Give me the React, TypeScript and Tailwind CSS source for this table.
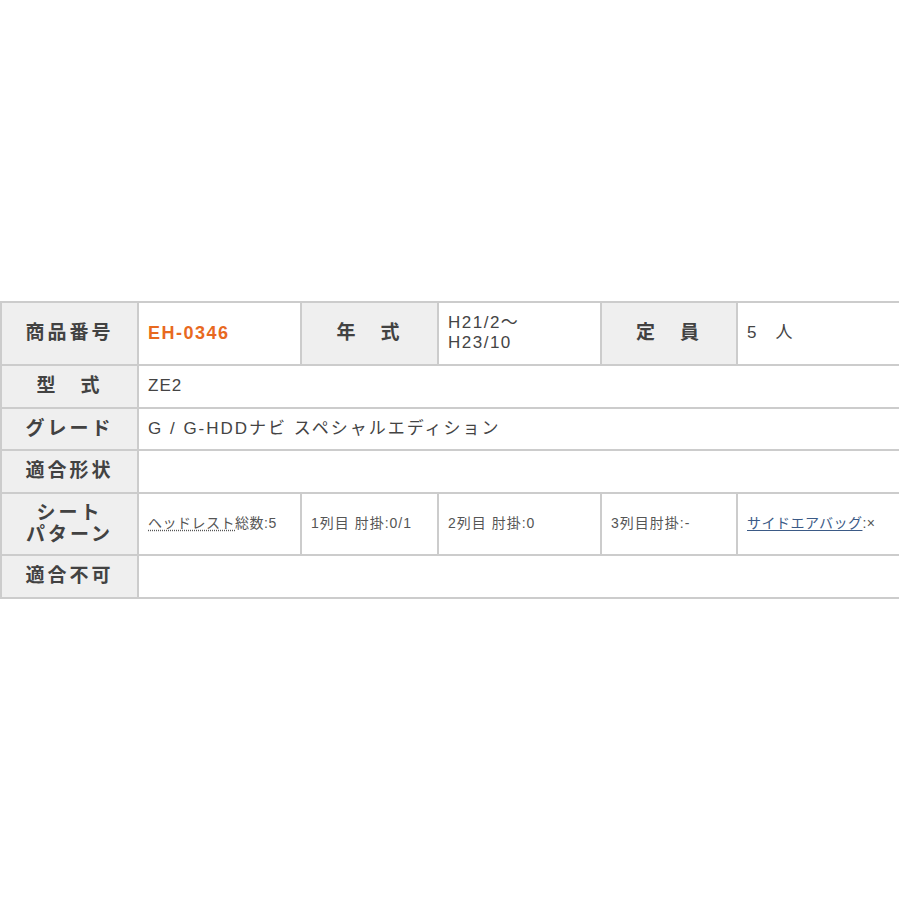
import React from "react";

const th =
  "bg-[#efefef] border-2 border-[#cccccc] text-center align-middle font-bold text-[19px] tracking-[3px] text-[#424242] leading-[22px]";
const cell = "bg-white border-2 border-[#cccccc] align-middle pl-[9px]";
const td = cell + " text-[#444] text-[17px] tracking-[1px]";
const small = cell + " text-[#555] text-[14px] tracking-[0.5px]";
const smallWide = cell + " text-[#555] text-[14px] tracking-[1px]";

function App() {
  return (
    <main
      className="flex h-[899px] w-[899px] items-center overflow-hidden bg-white"
      style={{ fontFamily: '"Liberation Sans", "Noto Sans CJK JP", sans-serif' }}
    >
      <table className="w-[902px] shrink-0 table-fixed border-collapse border-t-2 border-t-[#b5b5b5]">
        <colgroup>
          <col className="w-[137px]" />
          <col className="w-[163px]" />
          <col className="w-[137px]" />
          <col className="w-[163px]" />
          <col className="w-[136px]" />
          <col className="w-[166px]" />
        </colgroup>
        <tbody>
          <tr className="h-[63px]">
            <th className={th}>商品番号</th>
            <td className={cell + " font-bold text-[#e8691f] text-[18px] tracking-[1.5px]"}>EH-0346</td>
            <th className={th}>年　式</th>
            <td className={cell + " text-[#444] text-[17px] leading-[20px] tracking-[1.5px]"}>
              H21/2～
              <br />
              H23/10
            </td>
            <th className={th}>定　員</th>
            <td className={td}>5　人</td>
          </tr>
          <tr className="h-[43px]">
            <th className={th}>型　式</th>
            <td className={td} colSpan={5}>
              ZE2
            </td>
          </tr>
          <tr className="h-[42px]">
            <th className={th}>グレード</th>
            <td className={cell + " text-[#444] text-[17px] tracking-[2px]"} colSpan={5}>
              G / G-HDDナビ スペシャルエディション
            </td>
          </tr>
          <tr className="h-[43px]">
            <th className={th}>適合形状</th>
            <td className={td} colSpan={5}></td>
          </tr>
          <tr className="h-[62px]">
            <th className={th}>
              シート
              <br />
              パターン
            </th>
            <td className={small}>
              <span className="underline decoration-dotted decoration-[#555] underline-offset-2">ヘッドレスト</span>
              総数:5
            </td>
            <td className={smallWide}>1列目 肘掛:0/1</td>
            <td className={smallWide}>2列目 肘掛:0</td>
            <td className={smallWide}>3列目肘掛:-</td>
            <td className={small}>
              <a href="#" className="text-[#3b5a86] underline underline-offset-2">
                サイドエアバッグ
              </a>
              :×
            </td>
          </tr>
          <tr className="h-[43px]">
            <th className={th}>適合不可</th>
            <td className={td} colSpan={5}></td>
          </tr>
        </tbody>
      </table>
    </main>
  );
}

export default App;
